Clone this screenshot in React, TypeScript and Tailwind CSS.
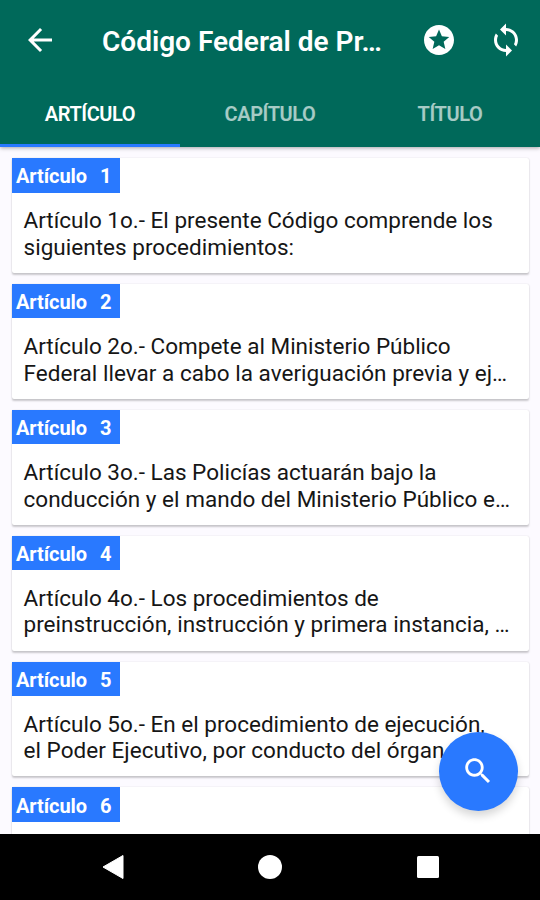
type Article = { id: number; lines: [string, string] };

const articles: Article[] = [
  { id: 1, lines: ["Artículo 1o.- El presente Código comprende los", "siguientes procedimientos:"] },
  { id: 2, lines: ["Artículo 2o.- Compete al Ministerio Público", "Federal llevar a cabo la averiguación previa y ej…"] },
  { id: 3, lines: ["Artículo 3o.- Las Policías actuarán bajo la", "conducción y el mando del Ministerio Público e…"] },
  { id: 4, lines: ["Artículo 4o.- Los procedimientos de", "preinstrucción, instrucción y primera instancia, …"] },
  { id: 5, lines: ["Artículo 5o.- En el procedimiento de ejecución,", "el Poder Ejecutivo, por conducto del órgan…"] },
  { id: 6, lines: ["", ""] },
];

function Icon({ d, size }: { d: string; size: number }) {
  return (
    <svg width={size} height={size} viewBox="0 0 24 24" fill="white" className="shrink-0">
      <path d={d} />
    </svg>
  );
}

function Card({ article }: { article: Article }) {
  return (
    <div className="h-[114.9px] shrink-0 rounded-[2px] bg-white shadow-[0_1.5px_2px_rgba(0,0,0,0.2),0_0_1.5px_rgba(0,0,0,0.1)]">
      <div className="flex h-[34.5px] w-[108px] items-center gap-[13px] bg-[#2979ff] pl-[4px] pt-[2px] text-[20px] font-bold leading-none tracking-[-0.1px] text-white">
        <span>Artículo</span>
        <span>{article.id}</span>
      </div>
      <div className="whitespace-nowrap pl-[11.5px] pt-[14.5px] text-[22.5px] leading-[26.8px] text-[#161616]">
        <div>{article.lines[0]}</div>
        <div className="tracking-[0.03px]">{article.lines[1]}</div>
      </div>
    </div>
  );
}

export default function App() {
  return (
    <div className="relative flex h-[900px] w-[540px] flex-col overflow-hidden bg-[#fcfaff] font-['Roboto',sans-serif]">
      <header className="z-10 flex h-[146.5px] shrink-0 flex-col bg-[#00695a] text-white shadow-[0_1px_4px_rgba(0,0,0,0.35)]">
        <div className="flex h-[81px] items-center pl-[22px] pr-[16px] pt-[2px]">
          <Icon size={36} d="M20 11H7.83l5.59-5.59L12 4l-8 8 8 8 1.41-1.41L7.83 13H20v-2z" />
          <div className="ml-[44px] w-[319px] whitespace-nowrap pt-[5px] text-[28px] font-semibold leading-none">Código Federal de Pr…</div>
          <Icon size={36} d="M11.99 2C6.47 2 2 6.48 2 12s4.47 10 9.99 10C17.52 22 22 17.52 22 12S17.52 2 11.99 2zm4.24 16L12 15.45 7.77 18l1.12-4.81-3.73-3.23 4.92-.42L12 5l1.92 4.53 4.92.42-3.73 3.23L16.23 18z" />
          <div className="ml-auto">
            <Icon size={36} d="M12 4V1L8 5l4 4V6c3.31 0 6 2.69 6 6 0 1.01-.25 1.97-.7 2.8l1.46 1.46C19.54 15.03 20 13.57 20 12c0-4.42-3.58-8-8-8zm0 14c-3.31 0-6-2.69-6-6 0-1.01.25-1.97.7-2.8L5.24 7.74C4.46 8.97 4 10.43 4 12c0 4.42 3.58 8 8 8v3l4-4-4-4v3z" />
          </div>
        </div>
        <nav className="grid flex-1 grid-cols-3 pt-[3px] text-center text-[20px] font-semibold leading-[60px] tracking-[-0.4px]">
          <div className="border-b-[3px] border-[#2979ff] pt-[3px]">ARTÍCULO</div>
          <div className="pt-[3px] text-white/65">CAPÍTULO</div>
          <div className="pt-[3px] text-white/65">TÍTULO</div>
        </nav>
      </header>
      <main className="flex min-h-0 flex-1 flex-col gap-[11px] overflow-hidden pl-[12px] pr-[11.5px] pt-[11.5px]">
        {articles.map((a) => <Card key={a.id} article={a} />)}
      </main>
      <button className="absolute left-[439px] top-[732px] flex size-[78.5px] items-center justify-center rounded-full bg-[#2979ff] pb-px pr-px shadow-[0_5px_9px_rgba(0,0,0,0.16)]">
        <Icon size={34} d="M15.5 14h-.79l-.28-.27C15.41 12.59 16 11.11 16 9.5 16 5.91 13.09 3 9.5 3S3 5.91 3 9.5 5.91 16 9.5 16c1.61 0 3.09-.59 4.23-1.57l.27.28v.79l5 4.99L20.49 19l-4.99-5zm-6 0C7.01 14 5 11.99 5 9.5S7.01 5 9.5 5 14 7.01 14 9.5 11.99 14 9.5 14z" />
      </button>
      <footer className="z-10 grid h-[66.5px] shrink-0 grid-cols-[225px_90px_225px] items-center justify-items-center bg-black">
        <svg width="24" height="26" viewBox="0 0 24 26" fill="white"><path d="M22 1.5v23L2 13z" stroke="white" strokeLinejoin="round" /></svg>
        <div className="size-[23.5px] rounded-full bg-white" />
        <div className="size-[22px] rounded-[1.5px] bg-white" />
      </footer>
    </div>
  );
}
